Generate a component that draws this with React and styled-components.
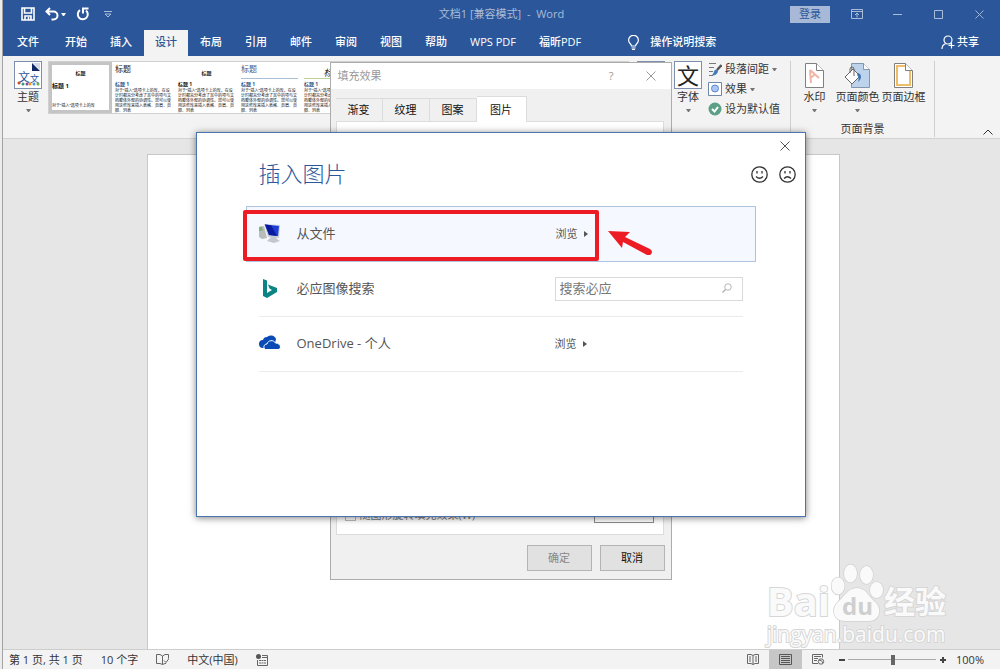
import React from "react";
import styled, { createGlobalStyle } from "styled-components";

const GlobalStyle = createGlobalStyle`
  * {
    box-sizing: border-box;
  }
  body {
    margin: 0;
    font-family: "Open Sans", "Noto Sans CJK SC", sans-serif;
    font-size: 11px;
    line-height: 16px;
    color: #333;
  }
  button,
  input {
    font: inherit;
    color: inherit;
  }
  button {
    border: 0;
    padding: 0;
    background: none;
  }
  svg {
    display: block;
    flex: none;
  }
`;

const tabs = ["开始", "插入", "设计", "布局", "引用", "邮件", "审阅", "视图", "帮助", "WPS PDF", "福昕PDF"];

const sampleText =
  "对于“插入”选项卡上的库，在设计时都充分考虑了其中的项与文档整体外观的协调性。您可以使用这些库来插入表格、页眉、页脚、列表";

const styleSets = [
  { title: 5, center: true, bold: true, selected: true, heading: 6, body: "对于“插入”选项卡上的库" },
  { title: 8, heading: 5, blue: true },
  { title: 5, center: true, bold: true, heading: 5 },
  { title: 8, heading: 5, blue: true, blueTitle: true, line: "#a9bfd8" },
  { title: 9, heading: 5, blue: true, center: true, italic: true, line: "#bcd294" },
];

const Icon = ({ w = 16, h = w, box, children, ...rest }) => (
  <svg
    width={w}
    height={h}
    viewBox={box || `0 0 ${w} ${h}`}
    fill='none'
    stroke='currentColor'
    aria-hidden='true'
    {...rest}
  >
    {children}
  </svg>
);

const CloseIcon = ({ size = 10 }) => (
  <Icon w={size} box='0 0 10 10'>
    <path d='M.5.5l9 9M9.5.5l-9 9' />
  </Icon>
);

const PaperIcon = ({ children, stroke = "#808080", w = 19 }) => (
  <Icon w={w} h={25} stroke={stroke}>
    <path d='M.5.5h11l7 7v17H.5z' fill='#fff' />
    {children}
    <path d='M11.5.5v7h7' fill='#fff' />
  </Icon>
);

const TitleBar = () => (
  <TitleBarStyled>
    <QuickAccess>
      <button aria-label='保存'>
        <Icon w={14} strokeWidth='1.6'>
          <path d='M1 1h12v12H1zM3.5 1v5h7V1M4 13V9h6v4' />
          <path d='M7.5 10v3' />
        </Icon>
      </button>
      <button aria-label='撤消'>
        <Icon w={14} strokeWidth='2'>
          <path d='M5 1L1.500 4.500 5 8M2 4.500h6.500a3.600 3.600 0 0 1 0 8H6.500' />
        </Icon>
        <Caret />
      </button>
      <button aria-label='恢复'>
        <Icon w={14} strokeWidth='2'>
          <path d='M4 3.200a5 5 0 1 0 6 .3M7 6.500V1.500H12.500' />
        </Icon>
      </button>
      <button aria-label='自定义快速访问工具栏'>
        <Icon w={8} h={7} stroke='#a9bcd8'>
          <path d='M0 .5h8M1 3l3 3 3-3z' />
        </Icon>
      </button>
    </QuickAccess>
    <DocTitle>文档1 [兼容模式]&nbsp; -&nbsp; Word</DocTitle>
    <WindowButtons>
      <LoginButton>登录</LoginButton>
      <WindowButton aria-label='功能区显示选项'>
        <Icon w={12} h={10}>
          <path d='M.5.5h11v9H.5zM.5 2.500h11M6 8.500v-4M4 6l2-2 2 2' />
        </Icon>
      </WindowButton>
      <WindowButton aria-label='最小化'>
        <Icon w={9}>
          <path d='M0 4.500h9' />
        </Icon>
      </WindowButton>
      <WindowButton aria-label='最大化'>
        <Icon w={9}>
          <path d='M.5.5h8v8h-8z' />
        </Icon>
      </WindowButton>
      <WindowButton aria-label='关闭'>
        <CloseIcon size={9} />
      </WindowButton>
    </WindowButtons>
  </TitleBarStyled>
);

const TabBar = () => (
  <TabBarStyled>
    <FileTab>文件</FileTab>
    {tabs.map((name) => (
      <Tab key={name} $active={name === "设计"}>
        {name}
      </Tab>
    ))}
    <TellMe>
      <Icon w={11} h={15} strokeWidth='1.2'>
        <path d='M3.500 11c0-2-2.900-2.700-2.900-5.800a4.900 4.900 0 0 1 9.800 0c0 3.100-2.900 3.800-2.900 5.800zM3.500 13h4M4 14.500h3' />
      </Icon>
      操作说明搜索
    </TellMe>
    <ShareButton>
      <Icon w={14} h={14} strokeWidth='1.2'>
        <circle cx='7' cy='5' r='4' />
        <path d='M1 14c0-2.500 1.500-4.500 3.600-5.200M8.500 9h1M10.500 7.500v6M7.500 10.500h6' />
      </Icon>
      共享
    </ShareButton>
  </TabBarStyled>
);

const Ribbon = () => (
  <RibbonStyled>
    <BigButton>
      <ThumbFrame>
        <Icon w={26} h={26} stroke='none'>
          <path d='M18 1h7v7z' fill='#d5dbe6' />
          <path d='M17 1v8h8z' fill='#0f2a66' />
          <text x='3' y='20' fontSize='12' fill='#2b579a'>文</text>
          <text x='15' y='20' fontSize='9' fill='#2b579a'>文</text>
          <circle cx='4' cy='21' r='1.500' fill='#d24726' />
          <circle cx='8' cy='22' r='1.500' fill='#2e9a86' />
          <circle cx='12' cy='22' r='1.500' fill='#7d4ba0' />
          <circle cx='15' cy='22' r='1.500' fill='#f0932b' />
          <circle cx='19' cy='22' r='1.500' fill='#4c9ad4' />
          <circle cx='23' cy='22' r='1.500' fill='#70ad47' />
        </Icon>
      </ThumbFrame>
      主题
      <Caret $muted />
    </BigButton>
    <Gallery>
      {styleSets.map((set, i) => (
        <StyleCard key={i} $selected={set.selected}>
          <SampleTitle $set={set}>标题</SampleTitle>
          <SampleHeading $set={set}>标题 1</SampleHeading>
          <SampleBody>{set.body || sampleText}</SampleBody>
        </StyleCard>
      ))}
    </Gallery>
    <ColorButton aria-label='颜色'>
      <ThumbFrame />
    </ColorButton>
    <BigButton>
      <ThumbFrame>
        <FontSample>文</FontSample>
      </ThumbFrame>
      字体
      <Caret $muted />
    </BigButton>
    <SmallButtons>
      <SmallButton>
        <Icon w={14} stroke='#777'>
          <path d='M1 1.500h7M1 5.500h5M1 9.500h4M1 13.500h4' />
          <path d='M13.500 3L9 8' stroke='#555' strokeWidth='2.500' />
          <path d='M9.500 8.500c0 3-2 4.500-5 4.500 2-1 1.500-4 3-5z' fill='#4478b8' stroke='#4478b8' />
        </Icon>
        段落间距
        <Caret $muted />
      </SmallButton>
      <SmallButton>
        <Icon w={14}>
          <path d='M.5.5h13v13H.5z' stroke='#6f87a8' fill='#fff' />
          <circle cx='7' cy='6.500' r='3.500' stroke='#5b86cd' fill='#a9c6f5' />
        </Icon>
        效果
        <Caret $muted />
      </SmallButton>
      <SmallButton>
        <Icon w={14}>
          <circle cx='7' cy='7' r='6.500' fill='#5ca088' stroke='none' />
          <path d='M4 7l2.500 2.500L10 5' stroke='#fff' strokeWidth='2' />
        </Icon>
        设为默认值
      </SmallButton>
    </SmallButtons>
    <BackgroundGroup>
      <GroupButtons>
        <BigButton>
          <PaperIcon>
            <path d='M5 7l1 13M5 7l9 8M5.500 15l5-4' stroke='#f0b5a6' strokeWidth='2' />
          </PaperIcon>
          水印
          <Caret $muted />
        </BigButton>
        <BigButton>
          <Icon w={27} h={25}>
            <path d='M7.500.5h12l6 6v18h-18z' fill='#bdd3ec' stroke='#8296b0' />
            <path d='M19.500.5v6h6' fill='#fff' stroke='#8296b0' />
            <path d='M1 14l8-8 7 7-8 8z' fill='#fff' stroke='#666' />
            <path d='M6 10V6a2 2 0 0 1 4 0v7' stroke='#666' />
            <path d='M14 10c4 1 4 6 0 9 1-3 1-5-1-7z' fill='#3b74b5' stroke='none' />
          </Icon>
          页面颜色
          <Caret $muted />
        </BigButton>
        <BigButton>
          <PaperIcon>
            <path d='M3 3h9l4 5v14H3z' stroke='#efbd68' strokeWidth='2' />
          </PaperIcon>
          页面边框
        </BigButton>
      </GroupButtons>
      页面背景
    </BackgroundGroup>
    <CollapseButton aria-label='折叠功能区'>
      <Icon w={10} h={6}>
        <path d='M.5 5.500L5 1l4.500 4.500' />
      </Icon>
    </CollapseButton>
  </RibbonStyled>
);

const FillEffectsDialog = () => (
  <FillDialogStyled role='dialog' aria-label='填充效果'>
    <FillHeader>
      填充效果
      <FillHeaderButtons>
        <button aria-label='帮助'>?</button>
        <button aria-label='关闭'>
          <CloseIcon />
        </button>
      </FillHeaderButtons>
    </FillHeader>
    <FillTabs>
      <FillTab>渐变</FillTab>
      <FillTab>纹理</FillTab>
      <FillTab>图案</FillTab>
      <FillTab $active>图片</FillTab>
    </FillTabs>
    <FillPanel>
      <CheckLabel>
        <input type='checkbox' disabled />
        随图形旋转填充效果(W)
      </CheckLabel>
      <SamplePreview />
    </FillPanel>
    <FillFooter>
      <DialogButton disabled>确定</DialogButton>
      <DialogButton>取消</DialogButton>
    </FillFooter>
  </FillDialogStyled>
);

const BrowseButton = () => (
  <Browse>
    浏览
    <Icon w={4} h={6} stroke='none'>
      <path d='M0 0l4 3-4 3z' fill='#555' />
    </Icon>
  </Browse>
);

const InsertPictureDialog = () => (
  <InsertDialogStyled role='dialog' aria-label='插入图片'>
    <CloseRow>
      <button aria-label='关闭'>
        <CloseIcon />
      </button>
    </CloseRow>
    <InsertHeader>
      <h1>插入图片</h1>
      <Feedback>
        <button aria-label='微笑'>
          <Icon w={17} strokeWidth='1.3'>
            <circle cx='8.500' cy='8.500' r='7.700' />
            <path d='M6 5v2.500M11 5v2.500M5 10.500q3.500 3.500 7 0' />
          </Icon>
        </button>
        <button aria-label='哭脸'>
          <Icon w={17} strokeWidth='1.3'>
            <circle cx='8.500' cy='8.500' r='7.700' />
            <path d='M6 5v2.500M11 5v2.500M5 12.500q3.500-3.500 7 0' />
          </Icon>
        </button>
      </Feedback>
    </InsertHeader>
    <SourceList>
      <SourceRow $selected>
        <Icon w={22} stroke='none'>
          <path d='M0 4l5-1 3 12-5 1-3-2z' fill='#b9bdb9' />
          <path d='M0 4l3-.5 1 4-4 .5z' fill='#7fae7f' />
          <path d='M5 1l16 1-1 13-11-1z' fill='#c9cedb' />
          <path d='M6 1.500l14 1.500-1 10-9-1z' fill='#1c3ed6' />
          <path d='M6 1.500l6 .7 6 10.800-8-1z' fill='#0a1a9c' />
          <path d='M12 14h5l1 2 3 2-6 2-7-2z' fill='#c4c8cc' />
        </Icon>
        <SourceName>从文件</SourceName>
        <BrowseButton />
        <Highlight />
        <HighlightArrow>
          <Icon w={46} h={26} stroke='none'>
            <path d='M1 2l22 1-5 5 25 12q3 2 1.500 4.500T40 26L16 13l-1 6z' fill='#ed1c24' />
          </Icon>
        </HighlightArrow>
      </SourceRow>
      <SourceRow>
        <Icon w={22} stroke='none'>
          <path d='M4 1l4 1.500v12.500l5-3-2.500-1.500L9 6.500l9 3.500V14L8 20l-4-2z' fill='#0c8484' />
        </Icon>
        <SourceName as='label' htmlFor='bing'>必应图像搜索</SourceName>
        <SearchBox>
          <input id='bing' placeholder='搜索必应' />
          <Icon w={10} stroke='#b5b5b5'>
            <circle cx='6' cy='4' r='3.300' />
            <path d='M3.500 6.500L.5 9.500' strokeWidth='1.500' />
          </Icon>
        </SearchBox>
      </SourceRow>
      <SourceRow>
        <Icon w={22} stroke='none'>
          <path d='M4 15a4 4 0 0 1 0-8 4 4 0 0 1 4-3A5.500 5.500 0 0 1 17 6l-2 9z' fill='#0a4ab4' />
          <path d='M6.500 16.500c-3-2-1.500-5.500 1.500-5.500 1-4 6.500-4.500 8.500-1 3 0 5 2 5 4 0 1.500-1 2.500-2.500 2.500z' fill='#0a4ab4' stroke='#fff' />
        </Icon>
        <SourceName>OneDrive - 个人</SourceName>
        <BrowseButton />
      </SourceRow>
    </SourceList>
  </InsertDialogStyled>
);

const Watermark = () => (
  <WatermarkStyled>
    <WatermarkLogo>
      <span>Bai</span>
      <Icon w={54} h={59} stroke='#d2d2d2' fill='#fafafa' strokeWidth='1.500'>
        <ellipse cx='8' cy='23' rx='6.500' ry='8.500' />
        <ellipse cx='20.500' cy='10.500' rx='6.500' ry='9' />
        <ellipse cx='36.500' cy='12' rx='6.500' ry='9' />
        <ellipse cx='46.500' cy='27' rx='6.500' ry='8' />
        <path d='M27 25c9 0 12 9 17 13 9 7 6 20-5 20H15C3 58 1 46 8 39c6-5 10-14 19-14z' />
        <text x='12' y='52' fontSize='24' fontWeight='700' stroke='none' fill='#cfcfcf'>du</text>
      </Icon>
      <WatermarkName>经验</WatermarkName>
    </WatermarkLogo>
    <WatermarkUrl>jingyan.baidu.com</WatermarkUrl>
  </WatermarkStyled>
);

const StatusBar = () => (
  <StatusBarStyled>
    <StatusGroup>
      <span>第 1 页, 共 1 页</span>
      <span>10 个字</span>
      <Icon w={13} h={11} stroke='#666'>
        <path d='M6.500 2v8.500M6.500 2L4 .5H.5v9H4l2.500 1L9 9.500h1M6.500 2L9 .5h3.500v4M8 6.500l2 2 3-4' />
      </Icon>
      <span>中文(中国)</span>
      <Icon w={12} h={12} stroke='#666'>
        <circle cx='2.500' cy='2.500' r='2.500' fill='#555' stroke='none' />
        <path d='M6 1.500h5.500v10h-10V6M6 3.500h5' />
        <path d='M3 6.500h7M3 9h7' strokeDasharray='2 .5' />
      </Icon>
    </StatusGroup>
    <ViewButtons>
      <ViewButton aria-label='阅读视图'>
        <Icon w={12} h={11} stroke='#666'>
          <path d='M6 1.500v9M6 1.500L4 .5H.5v9H4l2 1 2-1h3.500v-9H8zM2 3h2M2 5h2M2 7h2M8 3h2M8 5h2M8 7h2' />
        </Icon>
      </ViewButton>
      <ViewButton $active aria-label='页面视图'>
        <Icon w={13} h={11} stroke='#555'>
          <path d='M.5.5h12v10H.5zM2 2.500h9M2 4.500h9M2 6.500h9M2 8.500h9' />
        </Icon>
      </ViewButton>
      <ViewButton aria-label='Web 版式视图'>
        <Icon w={13} h={11} stroke='#666'>
          <path d='M6 9.500H.5v-9h10v3M2 2.500h7M2 4.500h4M2 6.500h3' />
          <circle cx='9' cy='7.500' r='2.700' />
          <path d='M7 6q3 0 4 3' />
        </Icon>
      </ViewButton>
    </ViewButtons>
    <Zoom>
      <ZoomButton aria-label='缩小'>
        <Icon w={6} strokeWidth='2'>
          <path d='M0 3h6' />
        </Icon>
      </ZoomButton>
      <ZoomSlider type='range' aria-label='显示比例' defaultValue='51' />
      <ZoomButton aria-label='放大'>
        <Icon w={6} strokeWidth='2'>
          <path d='M0 3h6M3 0v6' />
        </Icon>
      </ZoomButton>
      <span>100%</span>
    </Zoom>
  </StatusBarStyled>
);

const App = () => (
  <Desktop>
    <GlobalStyle />
    <Window>
      <TitleBar />
      <TabBar />
      <Ribbon />
      <Workspace>
        <Paper />
        <Watermark />
      </Workspace>
      <StatusBar />
      <Overlay $top={62}>
        <FillEffectsDialog />
      </Overlay>
      <Overlay $top={132}>
        <InsertPictureDialog />
      </Overlay>
    </Window>
  </Desktop>
);

const Desktop = styled.div`
  min-height: 100vh;
  display: flex;
  padding-left: 2px;
  background: #ececec;
`;

const Window = styled.div`
  position: relative;
  flex: 1;
  min-width: 0;
  display: flex;
  flex-direction: column;
  border-left: 1px solid #a3a3a3;
  background: #e6e6e6;
`;

const Caret = styled.span`
  width: 5px;
  border: 2px solid transparent;
  border-top: 3px solid ${({ $muted }) => ($muted ? "#777" : "currentColor")};
  border-bottom: 0;
`;

const TitleBarStyled = styled.header`
  height: 28px;
  display: grid;
  grid-template-columns: 1fr auto 1fr;
  align-items: center;
  background: #2b579a;
  color: #fff;
`;

const QuickAccess = styled.div`
  display: flex;
  align-items: center;
  gap: 10px;
  padding-left: 18px;

  button {
    display: flex;
    align-items: center;
    gap: 2px;
  }
  button:last-child {
    margin-left: 4px;
  }
`;

const DocTitle = styled.span`
  color: #a9bcd8;
`;

const WindowButtons = styled.div`
  display: flex;
  align-items: center;
  justify-content: flex-end;
  color: #a9bcd8;
`;

const WindowButton = styled.button`
  width: 41px;
  height: 28px;
  display: grid;
  place-items: center;
`;

const LoginButton = styled.button`
  width: 40px;
  height: 17px;
  margin-right: 6px;
  background: #a7b9d6;
  color: #2b579a;
`;

const TabBarStyled = styled.nav`
  height: 28px;
  display: flex;
  align-items: flex-end;
  gap: 1px;
  background: #2b579a;
  color: #fff;
`;

const Tab = styled.button`
  height: 26px;
  padding: 0 11px 2px;
  font-weight: 500;
  background: ${({ $active }) => ($active ? "#f3f3f3" : "transparent")};
  color: ${({ $active }) => ($active ? "#2b579a" : "#fff")};
`;

const FileTab = styled(Tab)`
  padding: 0 14px 2px;
`;

const TellMe = styled.button`
  height: 26px;
  display: flex;
  align-items: center;
  gap: 11px;
  margin-left: 35px;
  padding-bottom: 2px;
  font-weight: 500;
`;

const ShareButton = styled.button`
  height: 26px;
  display: flex;
  align-items: center;
  gap: 2px;
  margin-left: auto;
  padding: 0 21px 2px 0;
  font-weight: 500;
`;

const RibbonStyled = styled.div`
  height: 83px;
  display: flex;
  align-items: flex-start;
  padding: 5px 7px 0 10px;
  background: #f3f3f3;
  border-bottom: 1px solid #d2d2d2;
`;

const BigButton = styled.button`
  min-width: 30px;
  display: flex;
  flex-direction: column;
  align-items: center;
  white-space: nowrap;

  > span:last-child {
    margin-top: 4px;
  }
`;

const ThumbFrame = styled.span`
  width: 28px;
  height: 28px;
  display: grid;
  place-items: center;
  overflow: hidden;
  background: #fff;
  border: 1px solid #7c8fae;
`;

const FontSample = styled.span`
  font-size: 22px;
  line-height: 24px;
  color: #222;
`;

const Gallery = styled.div`
  flex: 1;
  min-width: 0;
  height: 53px;
  display: flex;
  margin: 0 8px 0 5px;
  overflow: hidden;
  background: #fff;
  border: 1px solid #d0d0d0;
`;

const StyleCard = styled.div`
  flex: none;
  width: 63px;
  height: 51px;
  padding: ${({ $selected }) => ($selected ? "2px 0 0" : "1px 3px 0")};
  border: ${({ $selected }) => ($selected ? "3px solid #c4c4c4" : "0")};
`;

const SampleTitle = styled.div`
  height: 16px;
  padding-top: ${({ $set }) => ($set.center && !$set.selected ? "4px" : "0")};
  font-size: ${({ $set }) => $set.title}px;
  line-height: 12px;
  font-weight: ${({ $set }) => ($set.bold ? 700 : 400)};
  font-style: ${({ $set }) => ($set.italic ? "italic" : "normal")};
  text-align: ${({ $set }) => ($set.center ? "center" : "left")};
  color: ${({ $set }) => ($set.blueTitle ? "#44608a" : "#222")};
  border-bottom: ${({ $set }) => ($set.line ? `1px solid ${$set.line}` : "0")};
`;

const SampleHeading = styled.div`
  padding-top: ${({ $set }) => ($set.selected ? "0" : "2px")};
  margin-bottom: ${({ $set }) => ($set.selected ? "13px" : "0")};
  font-size: ${({ $set }) => $set.heading}px;
  line-height: 7px;
  font-weight: 700;
  color: ${({ $set }) => ($set.blue ? "#2f5587" : "#111")};
`;

const SampleBody = styled.div`
  font-size: 4px;
  line-height: 5px;
  color: #111;
`;

const ColorButton = styled.button`
  margin-right: 8px;
`;

const SmallButtons = styled.div`
  width: 82px;
  margin-left: 5px;
`;

const SmallButton = styled.button`
  height: 20px;
  display: flex;
  align-items: center;
  gap: 3px;
  padding-bottom: 4px;
  white-space: nowrap;
`;

const BackgroundGroup = styled.div`
  width: 145px;
  height: 76px;
  display: flex;
  flex-direction: column;
  align-items: center;
  justify-content: space-between;
  border: 1px solid #cfcfcf;
  border-width: 0 1px;
`;

const GroupButtons = styled.div`
  display: flex;
  align-items: flex-start;
  gap: 2px;
  padding-top: 2px;

  svg {
    margin-bottom: 1px;
  }
  button:first-child {
    margin-right: 4px;
  }
`;

const CollapseButton = styled.button`
  width: 58px;
  display: flex;
  align-self: flex-end;
  justify-content: flex-end;
  padding-bottom: 3px;
`;

const Workspace = styled.main`
  position: relative;
  flex: 1;
  display: flex;
  justify-content: center;
  padding: 15px 16px 0 0;
`;

const Paper = styled.div`
  width: 71%;
  max-width: 693px;
  background: #fff;
  border: 1px solid #c8c8c8;
  border-bottom: 0;
`;

const StatusBarStyled = styled.footer`
  height: 20px;
  display: flex;
  align-items: center;
  background: #f3f3f3;
  border-top: 1px solid #cdcdcd;
`;

const StatusGroup = styled.div`
  flex: 1;
  display: flex;
  align-items: center;
  gap: 18px;
  padding-left: 6px;
`;

const ViewButtons = styled.div`
  display: flex;
`;

const ViewButton = styled.button`
  width: 33px;
  height: 19px;
  display: grid;
  place-items: center;
  background: ${({ $active }) => ($active ? "#c6c6c6" : "transparent")};
`;

const Zoom = styled.div`
  display: flex;
  align-items: center;
  padding: 0 16px 0 4px;

  span {
    margin-left: 10px;
  }
`;

const ZoomButton = styled.button`
  color: #444;
`;

const ZoomSlider = styled.input`
  appearance: none;
  width: 88px;
  height: 10px;
  margin: 0 4px 0 3px;
  background: linear-gradient(#aaa, #aaa) center / 100% 1px no-repeat;

  &::-webkit-slider-thumb {
    appearance: none;
    width: 4px;
    height: 10px;
    background: #666;
  }
`;

const Overlay = styled.div`
  position: absolute;
  top: ${({ $top }) => $top}px;
  left: 0;
  right: 0;
  display: flex;
  justify-content: center;
  padding-right: 2px;
`;

const FillDialogStyled = styled.section`
  width: 342px;
  background: #f0f0f0;
  border: 1px solid #acacac;
`;

const FillHeader = styled.div`
  height: 26px;
  display: flex;
  align-items: center;
  justify-content: space-between;
  padding: 0 15px 0 7px;
  background: #fff;
  color: #999;
`;

const FillHeaderButtons = styled.div`
  display: flex;
  align-items: center;
  gap: 32px;
`;

const FillTabs = styled.div`
  display: flex;
  align-items: flex-end;
  height: 32px;
  padding-left: 5px;
`;

const FillTab = styled.button`
  width: ${({ $active }) => ($active ? "50px" : "47px")};
  height: ${({ $active }) => ($active ? "26px" : "23px")};
  margin-bottom: ${({ $active }) => ($active ? "-1px" : "0")};
  background: ${({ $active }) => ($active ? "#fff" : "#f0f0f0")};
  border: 1px solid #dcdcdc;
  border-width: 1px 1px 0 0;
  color: #111;
`;

const FillPanel = styled.div`
  height: 414px;
  display: flex;
  align-items: flex-end;
  justify-content: space-between;
  margin: 0 7px 0 5px;
  padding: 0 9px 11px 8px;
  background: #fff;
  border: 1px solid #dcdcdc;
`;

const CheckLabel = styled.label`
  display: flex;
  align-items: center;
  gap: 4px;
  color: #777;

  input {
    appearance: none;
    width: 11px;
    height: 11px;
    margin: 0;
    border: 1px solid #bbb;
  }
`;

const SamplePreview = styled.div`
  width: 60px;
  height: 60px;
  border: 1px solid #8a8a8a;
  background: #fff;
`;

const FillFooter = styled.div`
  display: flex;
  justify-content: flex-end;
  gap: 8px;
  padding: 10px 6px 8px;
`;

const DialogButton = styled.button`
  width: 65px;
  height: 26px;
  background: #e1e1e1;
  border: 1px solid #b4b4b4;
  color: ${({ disabled }) => (disabled ? "#888" : "#111")};
`;

const InsertDialogStyled = styled.section`
  width: 610px;
  min-height: 385px;
  background: #fff;
  border: 1px solid #4a74b0;
  box-shadow: 0 1px 7px rgba(0, 0, 0, 0.5);
  color: #555;
`;

const CloseRow = styled.div`
  display: flex;
  justify-content: flex-end;
  padding: 8px 15px 6px;
`;

const InsertHeader = styled.div`
  display: flex;
  align-items: center;
  justify-content: space-between;
  padding: 0 9px 0 62px;

  h1 {
    margin: 0;
    font-size: 22px;
    line-height: 32px;
    font-weight: 300;
    color: #2b579a;
  }
`;

const Feedback = styled.div`
  display: flex;
  gap: 11px;
  padding-top: 2px;
  color: #333;
`;

const SourceList = styled.div`
  margin: 17px 49px 0;
`;

const SourceRow = styled.div`
  position: relative;
  height: ${({ $selected }) => ($selected ? "56px" : "55px")};
  display: grid;
  grid-template-columns: 38px 1fr 188px;
  align-items: center;
  margin: ${({ $selected }) => ($selected ? "0" : "0 13px")};
  padding: ${({ $selected }) => ($selected ? "0 11px 0 12px" : "0")};
  background: ${({ $selected }) => ($selected ? "#f5f9ff" : "#fff")};
  border: 1px solid #adc3e0;
  border-width: ${({ $selected }) => ($selected ? "1px" : "0 0 1px")};
  border-color: ${({ $selected }) => ($selected ? "#adc3e0" : "#ebebeb")};
  font-size: 13px;
`;

const SourceName = styled.span`
  padding-bottom: 2px;
`;

const Browse = styled.button`
  display: flex;
  align-items: center;
  gap: 6px;
  font-size: 11px;
`;

const SearchBox = styled.div`
  height: 24px;
  display: flex;
  align-items: center;
  padding: 0 10px 2px 4px;
  border: 1px solid #d9d9d9;

  input {
    flex: 1;
    min-width: 0;
    padding: 0;
    border: 0;
    outline: 0;
  }
  input::placeholder {
    color: #777;
  }
`;

const Highlight = styled.div`
  position: absolute;
  top: 3px;
  left: -4px;
  width: 356px;
  height: 51px;
  border: 4px solid #ed1c24;
  border-radius: 2px;
`;

const HighlightArrow = styled.div`
  position: absolute;
  top: 22px;
  left: 360px;
`;

const WatermarkStyled = styled.div`
  position: absolute;
  right: 54px;
  bottom: 3px;
  color: #fafafa;
  paint-order: stroke fill;
  -webkit-text-stroke: 2px #d6d6d6;
`;

const WatermarkLogo = styled.div`
  display: flex;
  align-items: flex-end;
  font-size: 40px;
  line-height: 42px;
  font-weight: 700;

  svg {
    -webkit-text-stroke: 0;
  }
`;

const WatermarkName = styled.span`
  font-size: 31px;
`;

const WatermarkUrl = styled.div`
  font-size: 21px;
  line-height: 24px;
`;

export default App;
